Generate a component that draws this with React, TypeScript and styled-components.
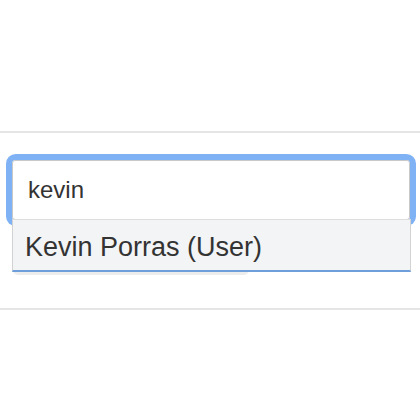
import styled, { createGlobalStyle } from 'styled-components';

const GlobalStyle = createGlobalStyle`
  html, body {
    margin: 0;
    padding: 0;
    background: #ffffff;
    font-family: "Liberation Sans", Arial, sans-serif;
  }
`;

const Page = styled.div`
  width: 420px;
  height: 420px;
  padding-top: 131px;
  box-sizing: border-box;
`;

const Section = styled.div`
  border-top: 2px solid #e5e5e5;
  border-bottom: 2px solid #e5e5e5;
  padding: 27px 10px 88px 12px;
`;

const Field = styled.div`
  position: relative;
  width: 398px;
  border-radius: 4px;
  box-shadow: 0 0 0 6px #7fb1f5;
`;

const Input = styled.input`
  display: block;
  width: 100%;
  height: 60px;
  box-sizing: border-box;
  margin: 0;
  padding: 0 0 0 15px;
  border: 1px solid #c9c9c9;
  border-radius: 3px;
  background: #ffffff;
  color: #333333;
  font-family: "Liberation Sans", Arial, sans-serif;
  font-size: 24px;
  outline: none;
`;

const Menu = styled.ul`
  position: absolute;
  top: 59px;
  left: 0;
  width: 399px;
  margin: 0;
  padding: 0;
  list-style: none;
  z-index: 2;
`;

const MenuShadow = styled.div`
  position: absolute;
  left: 1px;
  bottom: -3px;
  width: 236px;
  height: 6px;
  border-radius: 0 0 5px 5px;
  background: #ededed;
  z-index: -1;
`;

const Option = styled.li`
  height: 53px;
  box-sizing: border-box;
  padding: 4px 0 0 12px;
  display: flex;
  align-items: center;
  background: #f3f4f6;
  border-left: 1px solid #d2d2d2;
  border-right: 1px solid #d2d2d2;
  border-top: 1px solid #dedede;
  border-bottom: 2px solid #6f9fdb;
  color: #333333;
  font-size: 27px;
`;

export default function App() {
  return (
    <>
      <GlobalStyle />
      <Page>
        <Section>
          <Field>
            <Input defaultValue="kevin" />
            <Menu>
              <MenuShadow />
              <Option>Kevin Porras (User)</Option>
            </Menu>
          </Field>
        </Section>
      </Page>
    </>
  );
}
